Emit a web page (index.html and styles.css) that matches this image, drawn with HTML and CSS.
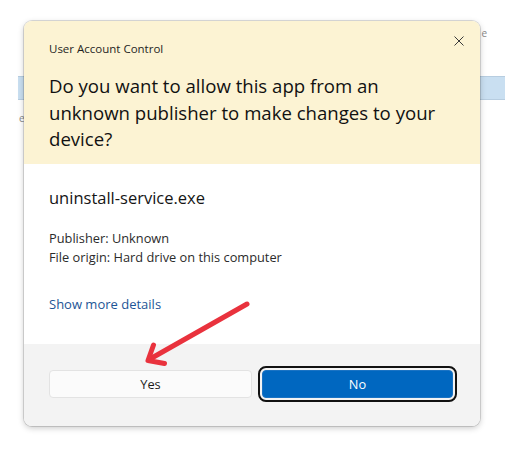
FILE: index.html
```html
<!DOCTYPE html>
<html lang="en">
<head>
<meta charset="utf-8">
<title>User Account Control</title>
<link rel="stylesheet" href="styles.css">
</head>
<body>
<div class="page">
  <div class="backdrop">
    <div class="bd-text bd-right">e</div>
    <div class="bd-bar"></div>
    <div class="bd-text bd-left">e</div>
  </div>
  <div class="stage">
    <div class="dialog">
      <div class="header">
        <div class="title-row">
          <span class="app-title">User Account Control</span>
          <svg class="close" width="10" height="10" viewBox="0 0 10 10" aria-hidden="true"><path d="M0.5 0.5 L9.5 9.5 M9.5 0.5 L0.5 9.5" stroke="#3a3a3a" stroke-width="1" fill="none"/></svg>
        </div>
        <h1 class="question">Do you want to allow this app from an unknown publisher to make changes to your device?</h1>
      </div>
      <div class="body">
        <div class="program">uninstall-service.exe</div>
        <div class="meta">
          <div>Publisher: Unknown</div>
          <div>File origin: Hard drive on this computer</div>
        </div>
        <a class="details" href="#">Show more details</a>
      </div>
      <div class="footer">
        <button class="btn btn-yes">Yes</button>
        <button class="btn btn-no">No</button>
      </div>
    </div>
    <svg class="arrow" width="505" height="450" viewBox="0 0 505 450" aria-hidden="true">
      <path d="M247 304 L150 359" stroke="#e9323d" stroke-width="5" stroke-linecap="round" fill="none"/>
      <path d="M153.5 345 L148 360.5 L164.5 363.5" stroke="#e9323d" stroke-width="5" stroke-linecap="round" stroke-linejoin="round" fill="none"/>
    </svg>
  </div>
</div>
</body>
</html>
```

FILE: styles.css
```css
html, body {
  margin: 0;
  padding: 0;
  background: #ffffff;
}

body {
  font-family: "Open Sans", "Noto Sans", sans-serif;
  color: #1b1b1b;
}

.page {
  display: grid;
  width: 505px;
  height: 450px;
  overflow: hidden;
}

.backdrop,
.stage {
  grid-area: 1 / 1;
}

/* background window peeking out from behind the dialog */
.backdrop {
  display: flex;
  flex-direction: column;
  padding-left: 18px;
}

.bd-text {
  font-size: 10px;
  line-height: 12px;
  color: #8a8a8a;
}

.bd-right {
  margin-top: 27px;
  align-self: flex-end;
  margin-right: 18px;
}

.bd-bar {
  margin-top: 37px;
  height: 22px;
  background: #c9dff1;
  border-top: 1px solid #b7cde0;
  border-bottom: 1px solid #b7cde0;
}

.bd-left {
  margin-top: 12px;
  margin-left: 1px;
}

.stage {
  position: relative;
  padding: 21px 0 0 24px;
}

.dialog {
  width: 456px;
  height: 405px;
  border-radius: 8px;
  overflow: hidden;
  background: #ffffff;
  box-shadow: 0 0 0 1px rgba(0, 0, 0, 0.13), 0 2px 6px rgba(0, 0, 0, 0.22);
  display: flex;
  flex-direction: column;
}

.header {
  background: #fcf3d3;
  padding: 20px 16px 11px 25px;
}

.title-row {
  display: flex;
  justify-content: space-between;
  align-items: flex-start;
}

.app-title {
  font-size: 11.5px;
  line-height: 16px;
  color: #1f1f1f;
}

.close {
  margin-top: -5px;
  display: block;
}

.question {
  margin: 16px 0 0 0;
  font-size: 18.6px;
  line-height: 26.5px;
  font-weight: 400;
  color: #111111;
  max-width: 400px;
}

.body {
  padding: 23px 25px 0 25px;
  flex: 1;
}

.program {
  font-size: 16.5px;
  line-height: 22px;
  color: #151515;
}

.meta {
  margin-top: 20px;
  font-size: 12.8px;
  line-height: 19px;
  color: #2b2b2b;
}

.details {
  display: block;
  margin-top: 28px;
  font-size: 13px;
  line-height: 18px;
  color: #1d5596;
  text-decoration: none;
}

.footer {
  background: #f3f3f3;
  height: 82px;
  box-sizing: border-box;
  padding: 26px 0 0 25px;
  display: flex;
  gap: 10px;
  align-items: flex-start;
}

.btn {
  height: 28px;
  border-radius: 4px;
  font-family: "Open Sans", "Noto Sans", sans-serif;
  font-size: 12.8px;
  padding: 0;
  box-sizing: border-box;
}

.btn-yes {
  width: 203px;
  background: #fbfbfb;
  border: 1px solid #e3e3e3;
  color: #1b1b1b;
}

.btn-no {
  width: 191px;
  background: #0067c0;
  border: 1px solid #1a73c4;
  color: #ffffff;
  outline: 2px solid #111111;
  outline-offset: 2px;
}

.arrow {
  position: absolute;
  left: 0;
  top: 0;
  pointer-events: none;
}
```
